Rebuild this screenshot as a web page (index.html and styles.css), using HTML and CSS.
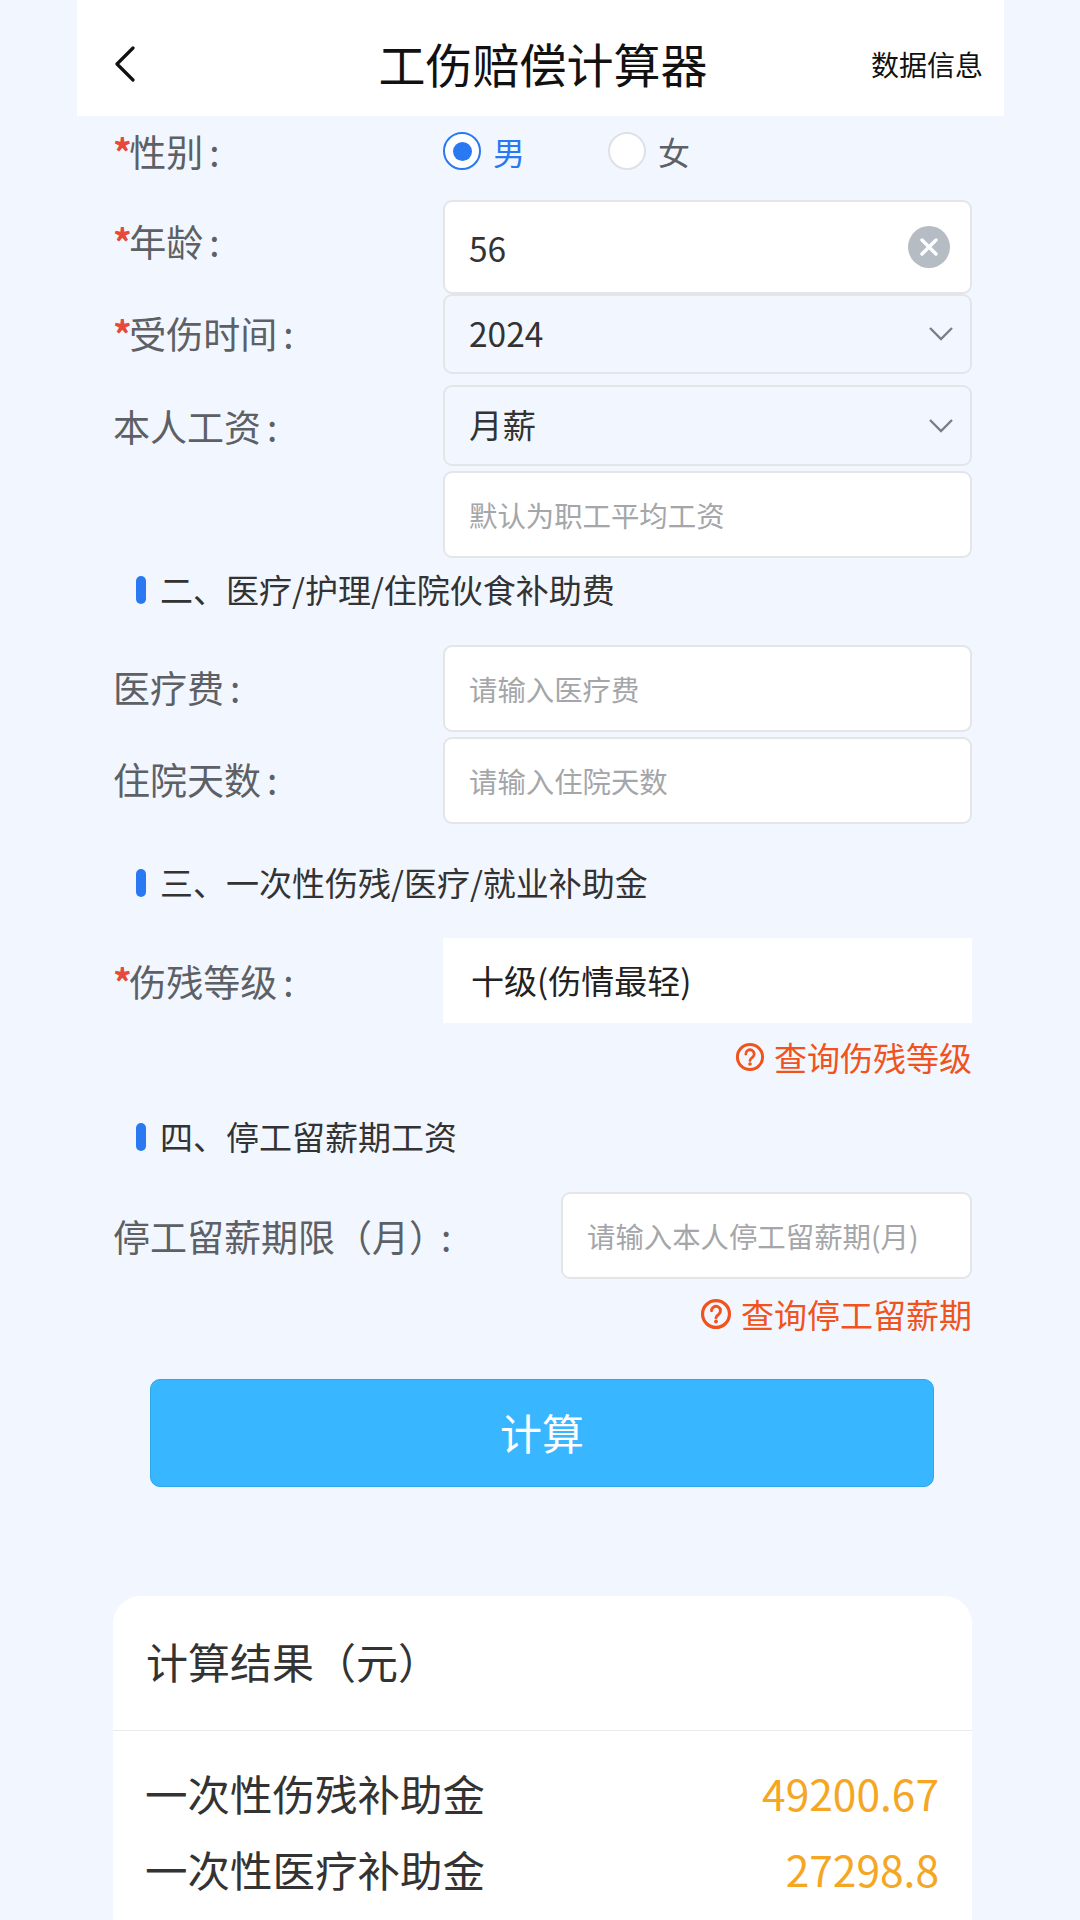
FILE: index.html
```html
<!DOCTYPE html>
<html lang="zh-CN">
<head>
<meta charset="utf-8">
<title>工伤赔偿计算器</title>
<link rel="stylesheet" href="styles.css">
</head>
<body>
<div class="page">
  <header class="nav">
    <div class="nav-left">
      <svg class="back" width="20" height="36" viewBox="0 0 20 36"><path d="M18 2 2 18l16 16" fill="none" stroke="#111" stroke-width="3.2" stroke-linecap="round" stroke-linejoin="round"/></svg>
    </div>
    <h1 class="nav-title">工伤赔偿计算器</h1>
    <div class="nav-right">数据信息</div>
  </header>

  <main class="form">
    <div class="row row-gender">
      <label class="label"><span class="req">*</span>性别<span class="colon">:</span></label>
      <div class="radios">
        <div class="radio radio-on"><span class="dot"></span><span class="radio-text">男</span></div>
        <div class="radio"><span class="dot"></span><span class="radio-text">女</span></div>
      </div>
    </div>

    <div class="row row-age">
      <label class="label label-age"><span class="req">*</span>年龄<span class="colon">:</span></label>
      <div class="field field-white h-age">
        <span class="value">56</span>
        <svg class="clear" width="42" height="42" viewBox="0 0 42 42"><circle cx="21" cy="21" r="21" fill="#b6bcc4"/><path d="M14 14l14 14M28 14 14 28" stroke="#fff" stroke-width="3.4" stroke-linecap="round"/></svg>
      </div>
    </div>

    <div class="row">
      <label class="label label-year"><span class="req">*</span>受伤时间<span class="colon">:</span></label>
      <div class="field h-year">
        <span class="value">2024</span>
        <svg class="chev" width="26" height="16" viewBox="0 0 26 16"><path d="M2 2l11 11L24 2" fill="none" stroke="#7b7f84" stroke-width="2.4"/></svg>
      </div>
    </div>

    <div class="row row-salary">
      <label class="label">本人工资<span class="colon">:</span></label>
      <div class="field h-month">
        <span class="value">月薪</span>
        <svg class="chev" width="26" height="16" viewBox="0 0 26 16"><path d="M2 2l11 11L24 2" fill="none" stroke="#7b7f84" stroke-width="2.4"/></svg>
      </div>
    </div>

    <div class="row row-avg">
      <div class="label"></div>
      <div class="field field-white h-input"><span class="placeholder">默认为职工平均工资</span></div>
    </div>

    <h2 class="section s2">二、医疗/护理/住院伙食补助费</h2>

    <div class="row row-med">
      <label class="label label-up">医疗费<span class="colon">:</span></label>
      <div class="field field-white h-input"><span class="placeholder">请输入医疗费</span></div>
    </div>
    <div class="row row-days">
      <label class="label label-up">住院天数<span class="colon">:</span></label>
      <div class="field field-white h-input"><span class="placeholder">请输入住院天数</span></div>
    </div>

    <h2 class="section s3">三、一次性伤残/医疗/就业补助金</h2>

    <div class="row row-level">
      <label class="label"><span class="req">*</span>伤残等级<span class="colon">:</span></label>
      <div class="level">十级(伤情最轻)</div>
    </div>
    <a class="query q1">
      <svg width="30" height="30" viewBox="0 0 30 30"><circle cx="15" cy="15" r="12.6" fill="none" stroke="#f0531e" stroke-width="3"/><path d="M10.8 12a4.2 4.2 0 1 1 6.6 3.4c-1.5 1-2.4 1.7-2.4 3.2" fill="none" stroke="#f0531e" stroke-width="2.8" stroke-linecap="round"/><circle cx="15" cy="22" r="1.8" fill="#f0531e"/></svg>
      <span>查询伤残等级</span>
    </a>

    <h2 class="section s4">四、停工留薪期工资</h2>

    <div class="row row-stop">
      <label class="label label-wide">停工留薪期限（月<span class="paren">）</span>:</label>
      <div class="field field-white h-input field-narrow"><span class="placeholder">请输入本人停工留薪期(月)</span></div>
    </div>
    <a class="query q2">
      <svg width="32" height="32" viewBox="0 0 30 30"><circle cx="15" cy="15" r="12.6" fill="none" stroke="#f0531e" stroke-width="3"/><path d="M10.8 12a4.2 4.2 0 1 1 6.6 3.4c-1.5 1-2.4 1.7-2.4 3.2" fill="none" stroke="#f0531e" stroke-width="2.8" stroke-linecap="round"/><circle cx="15" cy="22" r="1.8" fill="#f0531e"/></svg>
      <span>查询停工留薪期</span>
    </a>

    <button class="calc">计算</button>

    <section class="card">
      <div class="card-title">计算结果（元）</div>
      <div class="card-body">
        <div class="result"><span>一次性伤残补助金</span><span class="amount">49200.67</span></div>
        <div class="result"><span>一次性医疗补助金</span><span class="amount">27298.8</span></div>
      </div>
    </section>
  </main>
</div>
</body>
</html>
```
FILE: styles.css
```css
* { box-sizing: border-box; }
html, body { margin: 0; padding: 0; }
body {
  width: 1080px;
  height: 1920px;
  overflow: hidden;
  background: #f2f7ff;
  font-family: "Noto Sans CJK SC", "Noto Sans", sans-serif;
}
.page { width: 1080px; height: 1920px; overflow: hidden; padding: 0 76px 0 77px; }

.nav {
  height: 116px;
  background: #fff;
  display: grid;
  grid-template-columns: 1fr auto 1fr;
  align-items: center;
  padding: 18px 21px 0 38px;
}
.nav-left { display: flex; align-items: center; }
.back { display: block; margin-top: -6px; }
.nav-title { margin: 0 12px 8px 0; font-size: 47px; line-height: 60px; font-weight: 400; color: #111; }
.nav-right { text-align: right; font-size: 28px; line-height: 40px; color: #111; margin-top: -6px; }

.form { padding: 0 32px 0 36px; }

.row { display: flex; align-items: center; }
.row-gender { height: 69px; margin-bottom: 15px; }
.row-salary { margin-top: 11px; }
.row-avg { margin-top: 5px; }
.row-med { margin-top: 41px; }
.row-days { margin-top: 5px; }
.row-level { margin-top: 41px; }
.row-stop { margin-top: 41px; }

.label {
  flex: 0 0 330px;
  font-size: 37px;
  line-height: 50px;
  color: #5d6064;
  white-space: nowrap;
}
.label-age { padding-bottom: 12px; }
.label-year { padding-bottom: 2px; }
.label-up { padding-bottom: 3px; }
.label-wide { flex: 0 0 448px; }
.req { color: #e6493a; font-weight: 700; letter-spacing: -2.5px; }
.colon { padding-left: 6px; }
.paren { letter-spacing: -5px; }

.radios { display: flex; margin-top: 1px; }
.radio { display: flex; align-items: center; width: 165px; font-size: 32px; line-height: 40px; color: #5d6064; }
.dot {
  width: 38px; height: 38px; border-radius: 50%;
  background: #fff; border: 2px solid #dfe1e4;
  margin-right: 12px; position: relative;
}
.radio-on { color: #2a78f2; }
.radio-on .dot { border-color: #2a78f2; }
.radio-on .dot::after {
  content: ""; position: absolute; left: 7.5px; top: 7.5px;
  width: 19px; height: 19px; border-radius: 50%; background: #2a78f2;
}

.field {
  flex: 0 0 529px;
  display: flex; align-items: center; justify-content: space-between;
  border: 2px solid #e3e5e8;
  border-radius: 9px;
  padding: 0 22px 0 24px;
}
.field-white { background: #fff; }
.field-narrow { flex: 0 0 411px; }
.h-age { height: 94px; }
.h-year { height: 80px; }
.h-month { height: 81px; }
.h-input { height: 87px; }

.value { font-size: 33.5px; line-height: 44px; color: #333; margin-top: -3px; }
.h-age .value { margin-top: 2px; }
.clear { margin-right: -2px; }
.chev { margin-right: -6px; }
.placeholder { font-size: 28.4px; line-height: 40px; color: #a4a6a9; white-space: nowrap; }

.section {
  position: relative;
  margin: 0;
  height: 28px;
  padding-left: 47px;
  font-size: 33px;
  line-height: 26px;
  font-weight: 400;
  color: #333;
  white-space: nowrap;
}
.section::before {
  content: ""; position: absolute; left: 23px; top: 0;
  width: 10px; height: 28px; border-radius: 5px; background: #2a78f2;
}
.s2 { margin-top: 18px; }
.s3 { margin-top: 45px; }
.q1 + .s4 { margin-top: 46px; }

.level {
  flex: 0 0 529px;
  height: 85px;
  background: #fff;
  padding-left: 28px;
  font-size: 33px;
  line-height: 85px;
  color: #222;
}

.query {
  display: flex; justify-content: flex-end; align-items: center; gap: 9px;
  height: 40px;
  font-size: 33px; line-height: 40px; color: #f0531e;
}
.q1 { margin-top: 14px; }
.q2 { margin-top: 15px; }

.calc {
  display: block;
  width: 784px;
  height: 108px;
  margin: 45px 0 0 37px;
  padding: 0 0 3px;
  background: #38b6ff;
  border: 1px solid #2ea6ea;
  border-radius: 10px;
  color: #fff;
  font-family: inherit;
  font-size: 42px;
}

.card {
  margin-top: 109px;
  height: 340px;
  background: #fff;
  border-radius: 28px 28px 0 0;
}
.card-title {
  height: 135px;
  padding: 0 33px 5px;
  display: flex; align-items: center;
  font-size: 42px;
  color: #333;
  border-bottom: 1px solid #e9eaec;
}
.card-body { padding: 23px 33px 0 32px; }
.result {
  display: flex; justify-content: space-between; align-items: center;
  height: 76px;
  font-size: 42.5px;
  color: #333;
}
.amount { color: #f5a623; }
```
